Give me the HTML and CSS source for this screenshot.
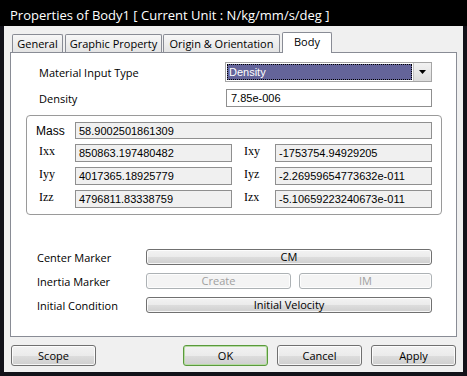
FILE: index.html
```html
<!DOCTYPE html>
<html>
<head>
<meta charset="utf-8">
<link rel="stylesheet" href="styles.css">
</head>
<body>
<div class="window">
  <div class="titlebar">Properties of Body1 [ Current Unit : N/kg/mm/s/deg ]</div>
  <div class="client">
    <div class="tabs">
      <div class="tab t-general">General</div>
      <div class="tab t-graphic">Graphic Property</div>
      <div class="tab t-origin">Origin &amp; Orientation</div>
      <div class="tab t-body active">Body</div>
    </div>
    <div class="pane">
      <div class="toprow row-material">
        <span class="lbl">Material Input Type</span>
        <div class="combo">
          <div class="combo-sel"><span class="combo-text">Density</span></div>
          <div class="combo-btn"><svg width="7" height="4" viewBox="0 0 7 4"><path d="M0 0H7L3.5 4Z" fill="#000"/></svg></div>
        </div>
      </div>
      <div class="toprow row-density">
        <span class="lbl">Density</span>
        <div class="input">7.85e-006</div>
      </div>
      <div class="group">
        <span class="glbl glbl-mass">Mass</span>
        <div class="field field-wide">58.9002501861309</div>
        <span class="glbl serif">Ixx</span>
        <div class="field">850863.197480482</div>
        <span class="glbl serif glbl2">Ixy</span>
        <div class="field">-1753754.94929205</div>
        <span class="glbl serif">Iyy</span>
        <div class="field">4017365.18925779</div>
        <span class="glbl serif glbl2">Iyz</span>
        <div class="field">-2.26959654773632e-011</div>
        <span class="glbl serif">Izz</span>
        <div class="field">4796811.83338759</div>
        <span class="glbl serif glbl2">Izx</span>
        <div class="field">-5.10659223240673e-011</div>
      </div>
      <div class="markers">
        <div class="mrow">
          <span class="mlbl">Center Marker</span>
          <div class="btn btn-full">CM</div>
        </div>
        <div class="mrow">
          <span class="mlbl">Inertia Marker</span>
          <div class="btn btn-create disabled">Create</div>
          <div class="btn btn-im disabled">IM</div>
        </div>
        <div class="mrow">
          <span class="mlbl">Initial Condition</span>
          <div class="btn btn-full">Initial Velocity</div>
        </div>
      </div>
    </div>
    <div class="footer">
      <div class="fbtn">Scope</div>
      <div class="spacer"></div>
      <div class="fbtn default">OK</div>
      <div class="fbtn">Cancel</div>
      <div class="fbtn">Apply</div>
    </div>
  </div>
</div>
</body>
</html>
```

FILE: styles.css
```css
html, body {
  margin: 0;
  padding: 0;
  background: #111118;
}
.window {
  width: 467px;
  height: 376px;
  background: #121219;
  display: flex;
  flex-direction: column;
  font-family: "Open Sans", "Noto Sans", sans-serif;
  font-size: 11px;
  color: #000;
  overflow: hidden;
}
.titlebar {
  height: 26px;
  flex: none;
  background: #000;
  color: #fff;
  font-size: 13px;
  line-height: 30px;
  padding-left: 10px;
  white-space: nowrap;
}
.client {
  flex: 1;
  margin: 0 4px 4px 4px;
  background: #f0f0f0;
  padding: 6px 6px 0 6px;
  display: flex;
  flex-direction: column;
}
.tabs {
  height: 20px;
  display: flex;
  align-items: flex-end;
  padding-left: 2px;
  position: relative;
  z-index: 1;
}
.tab {
  box-sizing: border-box;
  height: 18px;
  border: 1px solid #898c95;
  border-bottom: none;
  border-radius: 2px 2px 0 0;
  background: linear-gradient(#f7f7f7, #e4e4e4);
  font-size: 11px;
  line-height: 18px;
  text-align: center;
  margin-right: 2px;
  white-space: nowrap;
}
.t-general { width: 51px; }
.t-graphic { width: 97px; margin-right: 1px; }
.t-origin { width: 117px; }
.t-body { width: 50px; }
.tab.active {
  height: 21px;
  margin-bottom: -1px;
  background: #fff;
  line-height: 17px;
  margin-left: 0;
}
.pane {
  box-sizing: border-box;
  height: 285px;
  background: #fff;
  border: 1px solid #898c95;
  padding-top: 9px;
  display: flex;
  flex-direction: column;
}
.toprow {
  display: flex;
  align-items: center;
  padding-left: 28px;
}
.lbl {
  width: 186px;
  flex: none;
  font-size: 11px;
}
.row-material { height: 20px; }
.row-density { height: 18px; margin-top: 7px; }
.combo {
  box-sizing: border-box;
  width: 207px;
  height: 20px;
  border: 1px solid #a5a5a5;
  display: flex;
  background: #fff;
}
.combo-sel {
  flex: 1;
  padding: 1px;
  display: flex;
}
.combo-text {
  flex: 1;
  background: #64649a;
  color: #fff;
  outline: 1px dotted #000;
  outline-offset: -1px;
  font-family: "Liberation Sans", sans-serif;
  font-size: 11px;
  line-height: 16px;
  padding-left: 2px;
}
.combo-btn {
  width: 17px;
  border-left: 1px solid #c4c4c4;
  background: linear-gradient(#f2f2f2, #dcdcdc);
  display: flex;
  align-items: center;
  justify-content: center;
}
.input {
  box-sizing: border-box;
  margin-left: 1px;
  width: 206px;
  height: 18px;
  border: 1px solid #8f8f8f;
  background: #fff;
  font-family: "Liberation Sans", sans-serif;
  font-size: 11px;
  line-height: 16px;
  padding-left: 4px;
}
.group {
  box-sizing: border-box;
  margin: 8px 0 0 15px;
  width: 416px;
  height: 100px;
  border: 1px solid #9a9a9a;
  border-radius: 4px;
  box-shadow: inset 1px 1px 0 #fff;
  display: grid;
  grid-template-columns: 48px 157px 43px 157px;
  grid-template-rows: 17px 18px 18px 18px;
  row-gap: 5px;
  padding-top: 6px;
  align-items: center;
}
.glbl {
  padding-left: 12px;
  font-size: 11px;
}
.glbl-mass {
  padding-left: 9px;
  font-family: "Liberation Sans", sans-serif;
  font-size: 12px;
}
.glbl.serif {
  font-family: "Liberation Serif", serif;
  font-size: 12px;
  margin-top: -3px;
}
.field {
  box-sizing: border-box;
  height: 100%;
  border: 1px solid #8f8f8f;
  background: #f0f0f0;
  font-family: "Liberation Sans", sans-serif;
  font-size: 11px;
  line-height: 16px;
  padding-left: 3px;
  white-space: nowrap;
  overflow: hidden;
}
.field-wide {
  grid-column: 2 / 5;
}
.markers {
  margin-top: 34px;
  display: flex;
  flex-direction: column;
  gap: 8px;
}
.mrow {
  display: flex;
  align-items: center;
  height: 16px;
  padding-left: 26px;
}
.mlbl {
  width: 109px;
  flex: none;
  font-size: 11px;
}
.btn {
  box-sizing: border-box;
  height: 16px;
  border: 1px solid #707070;
  border-radius: 3px;
  background: linear-gradient(#f3f3f3 0%, #ebebeb 50%, #dddddd 51%, #cfcfcf 100%);
  box-shadow: inset 0 0 0 1px rgba(255,255,255,0.8);
  text-align: center;
  font-size: 11px;
  line-height: 14px;
}
.btn-full { width: 286px; }
.btn-create { width: 145px; }
.btn-im { width: 133px; margin-left: 8px; }
.btn.disabled {
  border-color: #adb2b5;
  background: #f4f4f4;
  color: #a0a0a0;
}
.footer {
  margin-top: 8px;
  display: flex;
  padding: 0 1px;
  gap: 9px;
}
.spacer { flex: 1; }
.fbtn {
  box-sizing: border-box;
  width: 85px;
  height: 21px;
  border: 1px solid #707070;
  border-radius: 3px;
  background: linear-gradient(#f2f2f2 0%, #ebebeb 50%, #dddddd 51%, #cfcfcf 100%);
  box-shadow: inset 0 0 0 1px rgba(255,255,255,0.8);
  text-align: center;
  font-size: 11px;
  line-height: 19px;
}
.fbtn.default {
  border-color: #5a9a3c;
  box-shadow: inset 0 0 0 1px #b7dca4;
}
```
